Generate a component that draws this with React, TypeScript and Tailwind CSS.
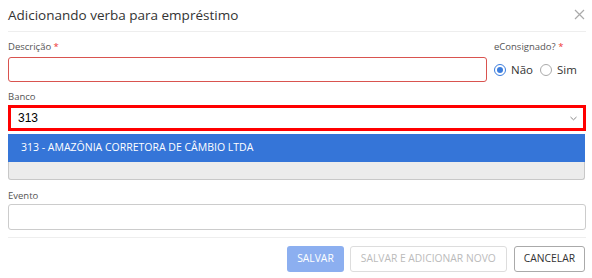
import React from "react";

export default function App() {
  return (
    <div className="w-[592px] h-[278px] bg-white pl-2 pr-[6px] font-['Open_Sans',sans-serif] text-[#333] overflow-hidden">
      <div className="h-[32px] flex items-center justify-between border-b border-[#eeeeee]">
        <span className="text-[13.5px] text-[#333] leading-none">Adicionando verba para empréstimo</span>
        <svg width="11" height="11" viewBox="0 0 11 11" className="mr-[1px] mb-[2px]">
          <path d="M1 1L10 10M10 1L1 10" stroke="#aaaaaa" strokeWidth="1.2" />
        </svg>
      </div>

      <div className="flex gap-[7px] mt-[8px]">
        <div className="flex-1 flex flex-col">
          <label className="text-[9.5px] leading-[14px] text-[#555]">
            Descrição <span className="text-[#e33]">*</span>
          </label>
          <div className="mt-[3px] h-[25px] border border-[#d9534f] rounded-[3px]"></div>
        </div>
        <div className="w-[92px] flex flex-col">
          <label className="text-[9.5px] leading-[14px] text-[#555]">
            eConsignado? <span className="text-[#e33]">*</span>
          </label>
          <div className="mt-[3px] h-[25px] flex items-center text-[11.5px] text-[#333]">
            <span className="w-[12px] h-[12px] rounded-full border border-[#3b7ddd] flex items-center justify-center">
              <span className="w-[6px] h-[6px] rounded-full bg-[#3b7ddd]"></span>
            </span>
            <span className="ml-[5px]">Não</span>
            <span className="ml-[7px] w-[12px] h-[12px] rounded-full border border-[#aaa]"></span>
            <span className="ml-[5px]">Sim</span>
          </div>
        </div>
      </div>

      <div className="mt-[8px] flex flex-col">
        <label className="text-[9.5px] leading-[14px] text-[#555]">Banco</label>
        <div className="mt-[1px] h-[26px] border-[3px] border-[#ff0000] flex items-center justify-between pl-[7px] pr-[6px]">
          <span className="text-[12px] text-black font-['Liberation_Sans',sans-serif]">313</span>
          <svg width="7" height="5" viewBox="0 0 7 5">
            <path d="M0.5 1L3.5 3.8L6.5 1" stroke="#888" fill="none" strokeWidth="1" />
          </svg>
        </div>
        <div className="mt-[3px] h-[46px] mr-[1px] bg-[#ececec] border border-[#c8c8c8] border-t-0 rounded-b-[3px] flex flex-col">
          <div className="h-[28px] -mx-px bg-[#3575d8] text-white text-[10.5px] flex items-center pl-[13px]">
            313 - AMAZÔNIA CORRETORA DE CÂMBIO LTDA
          </div>
        </div>
      </div>

      <div className="mt-[9px] flex flex-col">
        <label className="text-[9.5px] leading-[14px] text-[#555]">Evento</label>
        <div className="mt-[1px] h-[26px] border border-[#cccccc] rounded-[3px]"></div>
      </div>

      <div className="mt-[7px] border-t border-[#eeeeee] pt-[8px] flex justify-end pr-[1px]">
        <button className="h-[26px] px-[10px] rounded-[3px] bg-[#8caff0] text-white text-[10.3px]">SALVAR</button>
        <button className="ml-[6px] h-[26px] px-[10px] rounded-[3px] border border-[#dddddd] text-[#bbbbbb] text-[10.3px]">SALVAR E ADICIONAR NOVO</button>
        <button className="ml-[7px] h-[26px] px-[9px] rounded-[3px] border border-[#aaaaaa] text-[#333] text-[10.3px]">CANCELAR</button>
      </div>
    </div>
  );
}
